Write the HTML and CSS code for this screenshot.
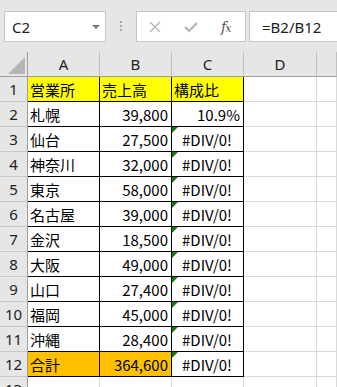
FILE: index.html
```html
<!DOCTYPE html>
<html lang="ja">
<head>
    <meta charset="UTF-8">
    <title>構成比</title>
    <link rel="stylesheet" href="styles.css">
</head>
<body>

<!-- formula bar -->
<div class="toolbar">
    <div class="namebox"><span>C2</span><span class="caret"></span></div>
    <div class="grip"><i></i><i></i><i></i></div>
    <div class="fxbox">
        <svg width="12" height="12" viewBox="0 0 12 12"><path d="M1 1 L11 11 M11 1 L1 11" stroke="#b4b4b4" stroke-width="1.4" fill="none"/></svg>
        <svg width="14" height="12" viewBox="0 0 14 12"><path d="M1 6 L5 10 L13 2" stroke="#b4b4b4" stroke-width="2" fill="none"/></svg>
        <span class="fx">f<span class="fxx">x</span></span>
    </div>
    <div class="formula">=B2/B12</div>
</div>

<!-- sheet -->
<div class="sheet">
    <div class="c corner"><span class="tri"></span></div>
    <div class="c hd">A</div>
    <div class="c hd">B</div>
    <div class="c hd">C</div>
    <div class="c hd">D</div>
    <div class="c hd"></div>

    <div class="c rh">1</div>
    <div class="c d yel">営業所</div>
    <div class="c d yel">売上高</div>
    <div class="c d yel">構成比</div>
    <div class="c"></div><div class="c"></div>

    <div class="c rh">2</div>
    <div class="c d">札幌</div>
    <div class="c d num">39,800</div>
    <div class="c d num">10.9%</div>
    <div class="c"></div><div class="c"></div>

    <div class="c rh">3</div>
    <div class="c d">仙台</div>
    <div class="c d num">27,500</div>
    <div class="c d err warn">#DIV/0!</div>
    <div class="c"></div><div class="c"></div>

    <div class="c rh">4</div>
    <div class="c d">神奈川</div>
    <div class="c d num">32,000</div>
    <div class="c d err warn">#DIV/0!</div>
    <div class="c"></div><div class="c"></div>

    <div class="c rh">5</div>
    <div class="c d">東京</div>
    <div class="c d num">58,000</div>
    <div class="c d err warn">#DIV/0!</div>
    <div class="c"></div><div class="c"></div>

    <div class="c rh">6</div>
    <div class="c d">名古屋</div>
    <div class="c d num">39,000</div>
    <div class="c d err warn">#DIV/0!</div>
    <div class="c"></div><div class="c"></div>

    <div class="c rh">7</div>
    <div class="c d">金沢</div>
    <div class="c d num">18,500</div>
    <div class="c d err warn">#DIV/0!</div>
    <div class="c"></div><div class="c"></div>

    <div class="c rh">8</div>
    <div class="c d">大阪</div>
    <div class="c d num">49,000</div>
    <div class="c d err warn">#DIV/0!</div>
    <div class="c"></div><div class="c"></div>

    <div class="c rh">9</div>
    <div class="c d">山口</div>
    <div class="c d num">27,400</div>
    <div class="c d err warn">#DIV/0!</div>
    <div class="c"></div><div class="c"></div>

    <div class="c rh">10</div>
    <div class="c d">福岡</div>
    <div class="c d num">45,000</div>
    <div class="c d err warn">#DIV/0!</div>
    <div class="c"></div><div class="c"></div>

    <div class="c rh">11</div>
    <div class="c d">沖縄</div>
    <div class="c d num">28,400</div>
    <div class="c d err warn">#DIV/0!</div>
    <div class="c"></div><div class="c"></div>

    <div class="c rh">12</div>
    <div class="c d org">合計</div>
    <div class="c d org num">364,600</div>
    <div class="c d err warn">#DIV/0!</div>
    <div class="c"></div><div class="c"></div>

    <div class="c rh">13</div>
    <div class="c"></div><div class="c"></div><div class="c"></div><div class="c"></div><div class="c"></div>
</div>

</body>
</html>
```

FILE: styles.css
```css
body {
    margin: 0;
    overflow: hidden;
    background: #fff;
    font-family: "Noto Sans CJK JP", sans-serif;
}

/* formula bar */
.toolbar {
    display: flex;
    align-items: flex-start;
    height: 52px;
    box-sizing: border-box;
    padding: 11px 0 0 4px;
    background: #e6e6e6;
}

.namebox {
    width: 102px;
    height: 31px;
    box-sizing: border-box;
    border: 1px solid #c6c6c6;
    background: #fff;
    display: flex;
    align-items: center;
    justify-content: space-between;
    padding: 0 5px 0 7px;
    font-family: "Noto Sans", sans-serif;
    font-size: 15px;
    color: #222;
}

.caret {
    width: 0;
    height: 0;
    border-left: 4px solid transparent;
    border-right: 4px solid transparent;
    border-top: 4px solid #777;
}

.grip {
    margin: 10px 0 0 14px;
    display: flex;
    flex-direction: column;
    gap: 2px;
}

.grip i {
    display: block;
    width: 2px;
    height: 2px;
    background: #a8a8a8;
}

.fxbox {
    margin-left: 14px;
    width: 110px;
    height: 31px;
    box-sizing: border-box;
    border: 1px solid #c6c6c6;
    background: #fff;
    display: flex;
    align-items: center;
    gap: 23px;
    padding-left: 12px;
}

.fx {
    font-family: "DejaVu Serif", serif;
    font-style: italic;
    font-size: 14px;
    color: #555;
    letter-spacing: -1px;
}

.fxx {
    font-size: 11px;
}

.formula {
    margin: 0 -10px 0 3px;
    flex: 1;
    height: 31px;
    box-sizing: border-box;
    border: 1px solid #c6c6c6;
    background: #fff;
    display: flex;
    align-items: center;
    padding-left: 12px;
    font-family: "Noto Sans", sans-serif;
    font-size: 15px;
    color: #222;
}

/* sheet */
.sheet {
    display: grid;
    grid-template-columns: 28px 72px 72px 72px 73px 1fr;
    grid-auto-rows: 25px;
}

.c {
    position: relative;
    box-sizing: border-box;
    border-right: 1px solid #d9d9d9;
    border-bottom: 1px solid #d9d9d9;
    display: flex;
    align-items: center;
    padding: 0 3px 0 2px;
    font-size: 15px;
    color: #000;
    white-space: nowrap;
    overflow: hidden;
}

.corner,
.hd,
.rh {
    background: #e6e6e6;
    justify-content: center;
    font-family: "Noto Sans", sans-serif;
    color: #222;
    padding: 0;
}

.hd {
    border-right-color: #c0c0c0;
    border-bottom-color: #9e9e9e;
}

.corner {
    border-right-color: #9e9e9e;
    border-bottom-color: #9e9e9e;
    justify-content: flex-end;
    align-items: flex-end;
    padding: 0 2px 2px 0;
}

.tri {
    width: 17px;
    height: 17px;
    background: #b5b5b5;
    clip-path: polygon(100% 0, 100% 100%, 0 100%);
}

.rh {
    border-right-color: #9e9e9e;
    border-bottom-color: #c8c8c8;
}

.d {
    border-right-color: #000;
    border-bottom-color: #000;
}

.num {
    justify-content: flex-end;
}

.err {
    justify-content: center;
}

.yel {
    background: #ffff00;
}

.org {
    background: #ffc000;
}

/* error indicator */
.warn::before {
    content: "";
    position: absolute;
    top: 0;
    left: 0;
    border-top: 6px solid #107c10;
    border-right: 6px solid transparent;
}
```
